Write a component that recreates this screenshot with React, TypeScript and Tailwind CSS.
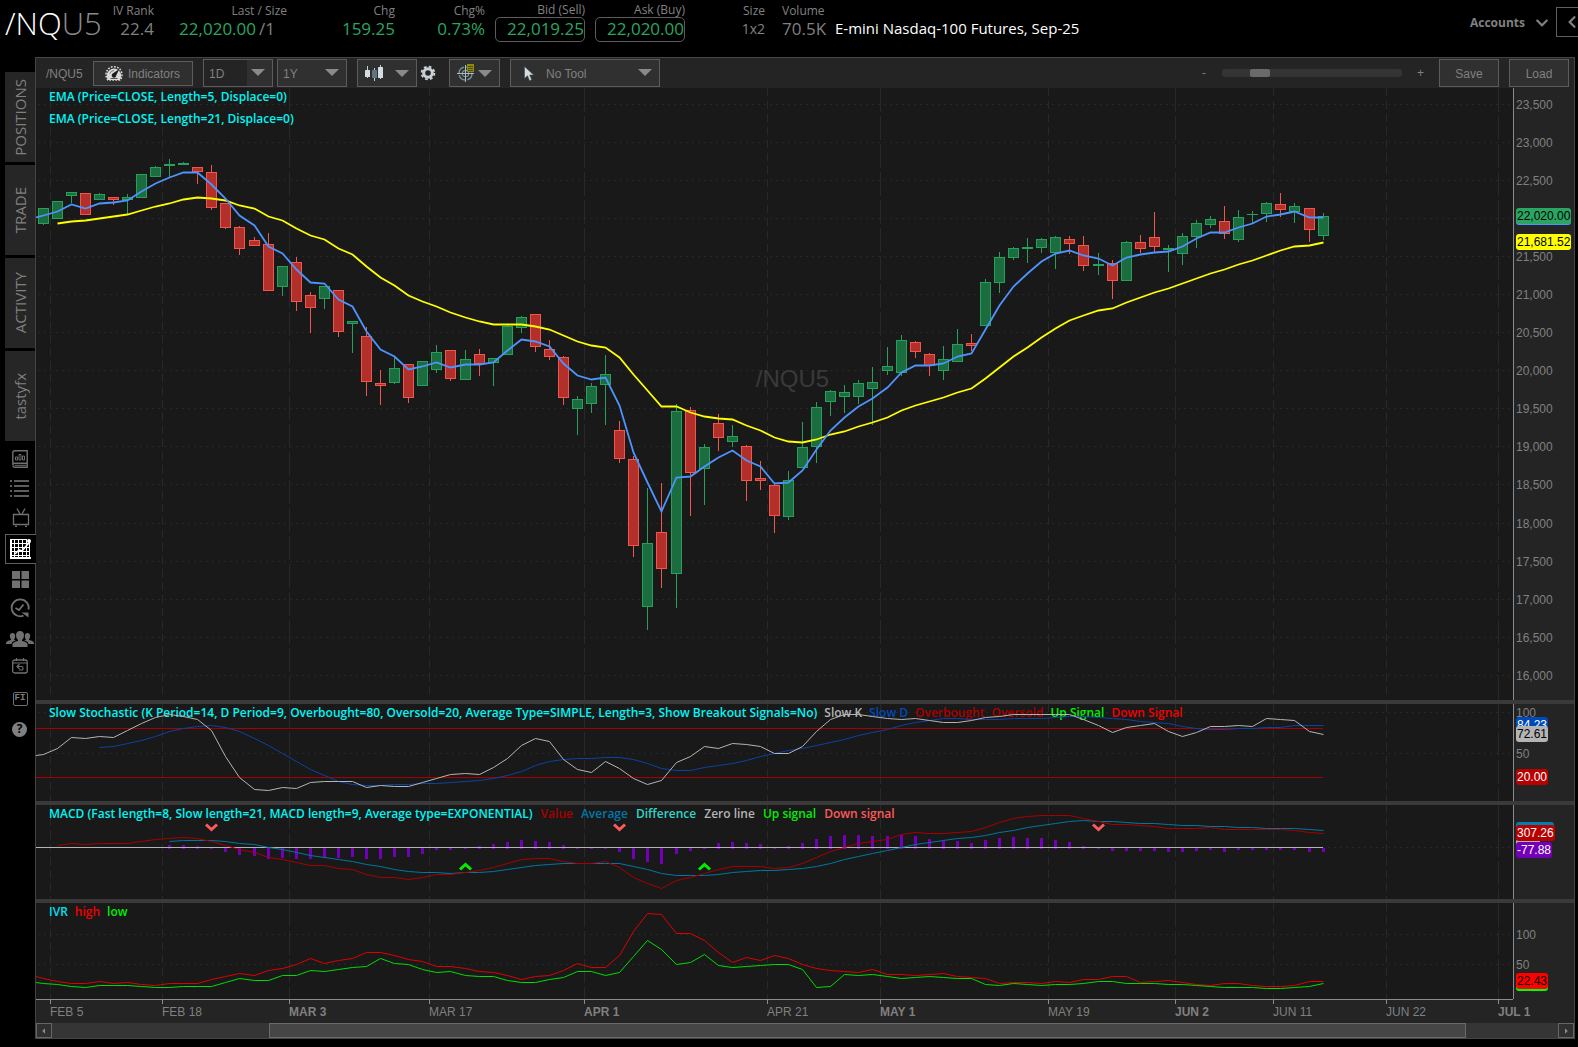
import React from "react";
import { FaCaretDown, FaChevronLeft, FaChevronDown } from "react-icons/fa";

/* ---------- chart data, in plot units ---------- */

// [direction, body top, body bottom, high, low]
type Candle = [number, number, number, number, number];
const G = 1;
const R = 0;
const candles: Candle[] = [
  [G, 208, 224, 208, 225], [G, 201, 219, 201, 219], [G, 192, 196, 192, 203], [R, 193, 215, 193, 215],
  [G, 194, 200, 193, 200], [R, 197, 200, 197, 205], [G, 197, 200, 194, 214], [G, 174, 198, 174, 198],
  [G, 167, 177, 166, 177], [G, 164, 166, 159, 177], [G, 163, 165, 162, 165], [R, 167, 172, 167, 184],
  [R, 172, 208, 165, 210], [R, 203, 228, 203, 229], [R, 227, 249, 226, 255], [R, 240, 246, 237, 246],
  [R, 244, 291, 233, 291], [G, 266, 287, 266, 296], [R, 262, 302, 257, 311], [R, 295, 308, 292, 333],
  [G, 286, 299, 286, 309], [R, 290, 332, 290, 337], [G, 321, 324, 321, 353], [R, 336, 382, 327, 396],
  [R, 383, 386, 370, 405], [G, 368, 383, 357, 384], [R, 364, 398, 364, 403], [G, 361, 386, 361, 386],
  [G, 352, 370, 345, 373], [R, 350, 379, 350, 381], [G, 359, 380, 350, 380], [R, 354, 364, 349, 376],
  [G, 358, 363, 358, 386], [G, 326, 355, 324, 355], [G, 317, 328, 316, 333], [R, 314, 347, 314, 352],
  [R, 349, 357, 340, 360], [R, 357, 398, 356, 405], [G, 399, 409, 396, 435], [G, 386, 404, 383, 413],
  [G, 374, 385, 355, 425], [R, 430, 459, 421, 463], [R, 459, 546, 456, 557], [G, 543, 607, 488, 630],
  [R, 532, 569, 483, 588], [G, 411, 574, 404, 608], [R, 410, 473, 407, 516], [G, 447, 469, 444, 505],
  [R, 423, 438, 414, 451], [G, 436, 442, 425, 447], [R, 446, 481, 445, 501], [R, 478, 481, 461, 490],
  [R, 485, 516, 483, 533], [G, 480, 517, 471, 520], [G, 447, 468, 422, 468], [G, 407, 447, 402, 463],
  [G, 391, 402, 390, 416], [G, 392, 397, 385, 413], [G, 383, 397, 380, 404], [G, 382, 389, 367, 425],
  [G, 366, 371, 347, 375], [G, 340, 373, 335, 376], [R, 342, 352, 341, 358], [R, 354, 366, 353, 376],
  [G, 359, 371, 346, 380], [G, 344, 362, 329, 362], [R, 343, 346, 334, 351], [G, 282, 326, 279, 326],
  [G, 257, 283, 252, 293], [G, 248, 258, 247, 260], [G, 247, 249, 238, 263], [G, 239, 248, 238, 253],
  [G, 237, 253, 236, 269], [R, 239, 244, 236, 254], [R, 245, 266, 236, 271], [G, 264, 266, 253, 275],
  [R, 263, 281, 260, 299], [G, 242, 281, 241, 281], [R, 242, 249, 235, 253], [R, 237, 247, 212, 253],
  [G, 248, 250, 245, 272], [G, 236, 254, 233, 265], [G, 223, 237, 220, 248], [G, 219, 225, 216, 228],
  [R, 221, 234, 206, 239], [G, 217, 240, 210, 242], [G, 214, 215, 211, 223], [G, 203, 214, 202, 222],
  [R, 204, 210, 193, 217], [G, 206, 212, 203, 223], [R, 208, 230, 208, 242], [G, 216, 236, 213, 240],
];

const ema5 = [215, 211, 204, 208, 203, 202, 200, 191, 183, 177, 172, 172, 184, 198, 215, 225, 246, 253, 269, 282, 283, 299, 306, 331, 349, 356, 369, 366, 362, 367, 364, 364, 362, 350, 339, 341, 346, 363, 375, 379, 377, 405, 452, 482, 511, 477, 476, 466, 457, 450, 460, 466, 483, 482, 470, 449, 430, 417, 406, 398, 387, 372, 365, 365, 363, 356, 353, 329, 305, 286, 273, 261, 253, 250, 255, 258, 265, 257, 254, 252, 251, 246, 238, 232, 232, 227, 223, 216, 214, 211, 217, 217];
const ema21 = [223, 221, 220, 218, 216, 214, 210, 206, 203, 199, 197, 198, 200, 205, 208, 216, 220, 228, 235, 239, 248, 254, 266, 277, 285, 295, 301, 306, 312, 317, 321, 324, 324, 324, 326, 329, 335, 341, 345, 347, 357, 374, 390, 406, 406, 412, 416, 418, 419, 425, 430, 437, 441, 442, 439, 434, 431, 426, 422, 417, 410, 405, 401, 397, 392, 388, 378, 367, 356, 347, 337, 328, 320, 315, 310, 308, 302, 297, 292, 288, 283, 278, 273, 269, 264, 260, 255, 250, 246, 245, 242];
const slowK = [754, 748, 737, 738, 736, 737, 730, 723, 717, 714, 716, 719, 730, 756, 777, 789, 790, 787, 788, 782, 781, 781, 781, 787, 785, 786, 786, 782, 778, 774, 773, 774, 767, 758, 745, 738, 741, 759, 769, 772, 761, 768, 778, 784, 780, 762, 756, 746, 748, 743, 744, 746, 753, 753, 746, 731, 719, 714, 714, 716, 718, 719, 718, 720, 722, 722, 720, 717, 716, 714, 714, 714, 714, 714, 719, 725, 732, 727, 725, 723, 731, 736, 732, 726, 726, 725, 726, 718, 719, 720, 731, 734];
const slowD = [747, 746, 743, 740, 736, 731, 728, 726, 725, 727, 731, 738, 745, 753, 761, 769, 775, 781, 784, 785, 785, 784, 784, 783, 783, 782, 781, 780, 778, 775, 771, 765, 761, 759, 758, 758, 757, 757, 759, 763, 768, 770, 770, 767, 765, 763, 760, 756, 753, 750, 748, 745, 742, 739, 735, 732, 729, 725, 722, 720, 718, 718, 719, 719, 719, 718, 718, 718, 717, 716, 716, 717, 718, 719, 721, 722, 723, 726, 728, 729, 729, 728, 728, 727, 727, 725, 725, 725];
const macdValue = [845, 843, 844, 843, 843, 843, 841, 839, 838, 837, 838, 841, 845, 849, 852, 857, 859, 862, 865, 865, 868, 869, 874, 877, 877, 879, 877, 874, 874, 872, 870, 867, 863, 859, 858, 858, 861, 863, 863, 861, 867, 877, 883, 888, 880, 877, 873, 869, 866, 866, 866, 868, 867, 863, 857, 851, 847, 843, 841, 839, 834, 832, 833, 833, 832, 831, 827, 822, 818, 816, 815, 815, 815, 818, 821, 824, 824, 825, 826, 828, 828, 828, 827, 829, 829, 829, 829, 829, 830, 832, 833];
const macdAvg = [841, 840, 840, 840, 841, 843, 844, 847, 849, 852, 855, 857, 859, 861, 864, 866, 869, 871, 872, 872, 873, 872, 872, 871, 869, 867, 865, 864, 863, 863, 863, 863, 863, 866, 869, 873, 875, 875, 875, 874, 872, 871, 870, 870, 869, 868, 866, 863, 859, 856, 853, 850, 847, 844, 842, 840, 838, 837, 835, 832, 830, 827, 825, 823, 821, 820, 821, 821, 822, 823, 823, 824, 825, 825, 826, 826, 827, 827, 828, 828, 828, 829, 830];
const macdDiff = [845, 845, 846, 849, 852, 855, 856, 859, 858, 859, 859, 858, 858, 857, 859, 859, 857, 857, 854, 850, 850, 849, 846, 844, 842, 840, 841, 842, 845, 847, 849, 847, 852, 859, 862, 864, 854, 851, 849, 843, 842, 843, 844, 849, 846, 843, 839, 836, 835, 835, 836, 836, 835, 836, 839, 841, 841, 843, 840, 838, 837, 838, 838, 840, 842, 846, 849, 851, 851, 851, 851, 852, 852, 851, 850, 852, 850, 850, 850, 850, 850, 852, 852];
const ivHigh = [978, 981, 983, 983, 981, 983, 982, 984, 985, 983, 983, 983, 979, 976, 973, 975, 970, 968, 964, 958, 963, 960, 958, 952, 952, 955, 959, 961, 966, 966, 968, 971, 972, 975, 979, 976, 975, 970, 963, 967, 967, 955, 931, 913, 914, 933, 933, 940, 952, 962, 957, 960, 955, 958, 964, 968, 970, 971, 972, 969, 974, 974, 975, 974, 973, 976, 977, 978, 983, 982, 982, 983, 981, 982, 979, 979, 976, 976, 982, 981, 980, 982, 984, 985, 983, 983, 985, 986, 986, 985, 981, 981];
const ivLow = [983, 984, 986, 987, 985, 985, 985, 986, 987, 987, 986, 986, 986, 982, 978, 980, 980, 975, 975, 970, 971, 969, 967, 966, 958, 963, 964, 969, 972, 971, 975, 976, 976, 980, 982, 982, 979, 977, 971, 971, 975, 972, 956, 940, 949, 964, 962, 954, 965, 967, 966, 965, 964, 964, 969, 987, 986, 974, 975, 974, 976, 978, 977, 976, 977, 978, 978, 984, 985, 983, 984, 985, 984, 984, 983, 981, 981, 983, 983, 983, 984, 984, 985, 986, 987, 987, 987, 988, 988, 987, 986, 983];

const X0 = 36;
const PLOT_W = 1477;
const barX = (i: number) => 43 + 14 * i + Math.floor(i / 15);
const line = (ys: number[], first: number, lead?: number) =>
  (lead === undefined ? "" : `${X0},${lead + 0.5} `) +
  ys.map((y, i) => `${barX(i + first) + 0.5},${y + 0.5}`).join(" ");

const dates = [
  { x: 50, label: "FEB 5", major: false },
  { x: 162, label: "FEB 18", major: false },
  { x: 289, label: "MAR 3", major: true },
  { x: 429, label: "MAR 17", major: false },
  { x: 584, label: "APR 1", major: true },
  { x: 767, label: "APR 21", major: false },
  { x: 880, label: "MAY 1", major: true },
  { x: 1048, label: "MAY 19", major: false },
  { x: 1175, label: "JUN 2", major: true },
  { x: 1273, label: "JUN 11", major: false },
  { x: 1386, label: "JUN 22", major: false },
  { x: 1498, label: "JUL 1", major: true },
];

const prices: [number, string][] = [
  [104, "23,500"], [142, "23,000"], [180, "22,500"], [218, "22,000"], [256, "21,500"], [294, "21,000"],
  [332, "20,500"], [370, "20,000"], [408, "19,500"], [446, "19,000"], [484, "18,500"], [523, "18,000"],
  [561, "17,500"], [599, "17,000"], [637, "16,500"], [675, "16,000"],
];

/* ---------- chart pane ---------- */

type Badge = { y: number; text?: string; cls: string };

type PaneProps = {
  name: string;
  top: number;
  height: number;
  className: string;
  ticks: [number, string][];
  badges: Badge[];
  legend: React.ReactNode;
  children: React.ReactNode;
};

function Pane({ name, top, height, className, ticks, badges, legend, children }: PaneProps) {
  const viewBox = `${X0} ${top} ${PLOT_W} ${height}`;
  const pct = (y: number) => `${((y + 1 - top) / height) * 100}%`;
  return (
    <section aria-label={name} className={`flex ${className}`}>
      <div className="relative min-w-0 flex-1 overflow-hidden bg-[#191919]">
        <svg className="absolute inset-0 h-full w-full" viewBox={viewBox} preserveAspectRatio="none" aria-hidden="true">
          {ticks.map(([y]) => (
            <line key={y} x1={X0 + 2} x2={X0 + PLOT_W} y1={y + 0.5} y2={y + 0.5} stroke="#272727" strokeDasharray="2 4" />
          ))}
          {dates.map((d) => (
            <line
              key={d.x}
              x1={d.x + 0.5}
              x2={d.x + 0.5}
              y1={top}
              y2={top + height}
              stroke="#292929"
              strokeDasharray={d.major ? "24 4" : "8 5"}
            />
          ))}
        </svg>
        {legend}
        <svg className="absolute inset-0 h-full w-full" viewBox={viewBox} preserveAspectRatio="none" role="img" aria-label={name}>
          {children}
        </svg>
      </div>
      <div className="relative w-[61px] shrink-0 overflow-hidden border-l border-[#8c8c8c] bg-[#242424] text-xs text-[#808080]">
        {ticks.map(([y, t]) =>
          t ? (
            <span key={y} className="absolute left-[2px] -translate-y-1/2 leading-4" style={{ top: pct(y) }}>
              {t}
            </span>
          ) : null
        )}
        {badges.map((b, i) => (
          <span
            key={i}
            className={`absolute left-[2px] h-4 -translate-y-1/2 rounded-[3px] px-px leading-4 ${b.cls}`}
            style={{ top: pct(b.y - 1) }}
          >
            {b.text}
          </span>
        ))}
      </div>
    </section>
  );
}

const Divider = () => <div className="h-1 shrink-0 bg-[#3a3a3a]" />;

function Legend({ items, gap = "gap-2" }: { items: [string, string][]; gap?: string }) {
  return (
    <div className={`absolute left-[13px] top-px flex whitespace-nowrap font-['Open_Sans',sans-serif] text-xs font-semibold leading-4 ${gap}`}>
      {items.map(([text, cls]) => (
        <span key={text} className={cls}>
          {text}
        </span>
      ))}
    </div>
  );
}

function Candles() {
  return (
    <g shapeRendering="crispEdges">
      {candles.map(([up, t, b, h, l], i) => {
        const x = barX(i);
        const stroke = up ? "#27a05b" : "#f0564c";
        const fill = up ? "#1b6c3e" : "#b3302a";
        return (
          <g key={i}>
            <rect x={x} y={h} width={1} height={l - h} fill={stroke} />
            <rect x={x - 5} y={t} width={11} height={b - t} fill={stroke} />
            {b - t > 2 && <rect x={x - 4} y={t + 1} width={9} height={b - t - 2} fill={fill} />}
          </g>
        );
      })}
    </g>
  );
}

/* ---------- toolbar and side icons ---------- */

function GaugeIcon() {
  return (
    <svg viewBox="0 0 18 16" className="h-4 w-[18px]" aria-hidden="true">
      <path d="M3 15A8 8 0 1 1 15 15Z" fill="none" stroke="#d6d6d6" strokeWidth="1.6" strokeDasharray="1.7 1.3" />
      <path d="M3.2 15A7.200 7.200 0 1 1 14.800 15Z" fill="#d9d9d9" />
      <path d="M4.800 8.500A4.500 4.500 0 0 1 9 5.500" stroke="#777" strokeWidth="1" fill="none" />
      <path d="M14.300 4 11.300 10.300a2.300 2.300 0 1 1-3.200-2Z" fill="#1c1c1c" />
      <rect x="5.500" y="13" width="7" height="1" fill="#555" />
    </svg>
  );
}

function CandleIcon() {
  return (
    <svg viewBox="0 0 18 16" className="h-4 w-[18px]" aria-hidden="true">
      <path d="M2.500 1v12M9.500 3v13M15.500 0v14" stroke="#c3d0d6" />
      <rect x="0" y="5" width="5" height="7" rx=".5" fill="#d5dde0" />
      <rect x="7" y="5" width="5" height="8" rx=".5" fill="#5f7680" />
      <rect x="13" y="2" width="5" height="11" rx=".5" fill="#d5dde0" />
    </svg>
  );
}

function GearIcon() {
  return (
    <svg viewBox="0 0 16 16" className="h-4 w-4" aria-hidden="true">
      <circle cx="8" cy="8" r="6.4" fill="none" stroke="#cfd8db" strokeWidth="1.8" strokeDasharray="2.7 2.327" />
      <circle cx="8" cy="8" r="4.300" fill="none" stroke="#c8d2d6" strokeWidth="3" />
    </svg>
  );
}

function CrosshairIcon() {
  return (
    <svg viewBox="0 0 18 18" className="h-[18px] w-[18px]" aria-hidden="true">
      <circle cx="8.500" cy="9.500" r="6.500" fill="none" stroke="#76909c" strokeWidth="1.400" strokeDasharray="8 2.200" />
      <circle cx="8.500" cy="9.500" r="3.200" fill="none" stroke="#76909c" strokeWidth="1.200" />
      <path d="M8.500 1v17M0 9.500h17" stroke="#a9bcc4" />
      <rect x="10" y="0" width="7" height="8" fill="#8f8a10" />
      <path d="M11 2.500h5M11 4.500h5M11 6.500h5" stroke="#4f4b08" />
    </svg>
  );
}

function CursorIcon() {
  return (
    <svg viewBox="0 0 10 16" className="h-4 w-[10px]" aria-hidden="true">
      <path d="M.5.5v12l3-2.800 2 5 2.200-1-2-4.700h4Z" fill="#d5dde0" stroke="#3b474c" strokeWidth=".6" />
    </svg>
  );
}

type Glyph = { name: string; cls: string; art: React.ReactNode };

const glyphs: Glyph[] = [
  {
    name: "Watchlist report",
    cls: "mt-2 h-5",
    art: (
      <svg viewBox="0 0 16 18" className="h-[18px] w-4">
        <path d="M.8 2.500Q.8.700 2.600.700h12.600v12.600H2.600Q.8 13.300.8 15V2.500M15.200 13.300v4H2.600A2 2 0 0 1 .8 15.400" fill="none" stroke="#707070" strokeWidth="1.400" />
        <path d="M2.500 15.300h12" stroke="#707070" />
        <path d="M3.500 10V7h2v3ZM7 10V4.500h2V10ZM10.500 10V6h2v4Z" fill="none" stroke="#707070" />
      </svg>
    ),
  },
  {
    name: "List",
    cls: "mt-[10px] h-[18px]",
    art: (
      <svg viewBox="0 0 20 17" className="h-[17px] w-5" shapeRendering="crispEdges">
        <path d="M0 1h2M0 6h2M0 11h2M0 16h2M4 1h15M4 6h15M4 11h15M4 16h15" stroke="#5e5e5e" strokeWidth="2" />
      </svg>
    ),
  },
  {
    name: "TV",
    cls: "mt-[10px] h-5",
    art: (
      <svg viewBox="0 0 18 19" className="ml-[2px] h-[19px] w-[18px]">
        <path d="M1.500 6.500h15v10h-15ZM3 18.300h2M13 18.300h2M8 6 5 .5M10 6l3-5.500" fill="none" stroke="#707070" strokeWidth="1.300" />
      </svg>
    ),
  },
  {
    name: "Chart",
    cls: "relative z-10 -mr-px mt-[7px] h-[30px] border border-r-0 border-[#606060] bg-black pr-[2px]",
    art: (
      <svg viewBox="0 0 21 20" className="h-5 w-[21px]">
        <path
          d="M4.500 0v20M8.500 0v20M12.500 0v20M16.500 0v20M19.500 5v15M0 .500h17M0 4.500h20M0 8.500h20M0 12.500h20M0 16.500h20"
          stroke="#fff"
          shapeRendering="crispEdges"
        />
        <path d="M1 0v19h20" stroke="#fff" strokeWidth="2" fill="none" />
        <path d="M5 15 9 11l3 1 5-6 3-3" stroke="#fff" strokeWidth="1.600" fill="none" />
        <circle cx="19" cy="2" r="2" fill="#fff" />
      </svg>
    ),
  },
  {
    name: "Grid",
    cls: "mt-[6px] h-[18px]",
    art: (
      <svg viewBox="0 0 17 17" className="h-[17px] w-[17px] fill-[#707070]">
        <path d="M0 0h8v8H0zM9.500 0h8v8h-8zM0 9.500h8v8H0zM9.500 9.500h8v8h-8z" />
      </svg>
    ),
  },
  {
    name: "History",
    cls: "mt-[10px] h-5",
    art: (
      <svg viewBox="0 0 20 20" className="h-5 w-5">
        <path d="M13.500 17.600A8.500 8.500 0 1 1 18.500 11.500" fill="none" stroke="#707070" strokeWidth="1.800" />
        <path d="M11.500 14.500h7v5Z" fill="#707070" />
        <path d="M5.500 10 9 12l4.500-5.500" fill="none" stroke="#707070" strokeWidth="1.800" />
      </svg>
    ),
  },
  {
    name: "Community",
    cls: "mt-3 h-[17px]",
    art: (
      <svg viewBox="0 0 28 16" className="h-4 w-7 fill-[#707070]">
        <path d="M14 0q4 0 4 4.500 0 3-2 4.500v1q5.500 1 5.500 3.500V16h-15v-2.500Q6.500 11 12 10V9q-2-1.500-2-4.500Q10 0 14 0Z" />
        <path d="M6.500 2q2.500 0 2.700 3 0 2-1 3.200v.8L10 9.600Q5.800 10.600 5.500 13H0v-1Q.3 10 5 9v-.800Q3.800 7 3.800 5 4 2 6.500 2ZM21.500 2q-2.500 0-2.700 3 0 2 1 3.200v.8L18 9.600q4.200 1 4.500 3.400H28v-1q-.3-2-5-3v-.800q1.200-1.200 1.200-3.200-.2-3-2.700-3Z" />
      </svg>
    ),
  },
  {
    name: "Calendar",
    cls: "mt-[11px] h-4",
    art: (
      <svg viewBox="0 0 16 16" className="h-4 w-4">
        <rect x=".7" y="2" width="14.500" height="13" rx="2" fill="none" stroke="#707070" strokeWidth="1.300" />
        <path d="M1 5h14M4.500 0v3M11.500 0v3" stroke="#707070" strokeWidth="1.200" />
        <path d="M7.500 6 5 8.500 7.500 11M5 8.500h4.500q1.500 0 1.500 1.800t-1.500 1.700H7" fill="none" stroke="#707070" strokeWidth="1.200" />
      </svg>
    ),
  },
  {
    name: "Fixed income",
    cls: "mt-[17px] h-[15px]",
    art: (
      <span className="flex h-[14px] w-[15px] items-center justify-center rounded-[2px] border border-[#707070] font-['Liberation_Mono',monospace] text-[9px] font-bold leading-none">
        FI
      </span>
    ),
  },
  {
    name: "Help",
    cls: "mt-[15px] h-4",
    art: (
      <span className="-ml-px flex h-[15px] w-[15px] items-center justify-center rounded-full bg-[#808080] font-['Open_Sans',sans-serif] text-[12px] font-bold leading-none text-black">
        ?
      </span>
    ),
  },
];

/* ---------- header quote cells ---------- */

function Quote({ label, children, className, align = "items-end" }: { label: string; children: React.ReactNode; className: string; align?: string }) {
  return (
    <div className={`flex shrink-0 flex-col whitespace-nowrap ${align} ${className}`}>
      <span className="text-xs leading-4 text-[#808080]">{label}</span>
      <span className="flex h-5 items-center text-[17px] leading-5">{children}</span>
    </div>
  );
}

function PriceButton({ label, value }: { label: string; value: string }) {
  return (
    <div className="ml-[10px] flex w-[90px] flex-col items-end whitespace-nowrap">
      <span className="text-xs leading-[14px]">{label}</span>
      <button
        type="button"
        aria-label={`${label} ${value}`}
        className="h-[25px] w-full rounded-[5px] border border-[#5c5c5c] pb-[2px] text-right text-[17px] leading-5 text-[#2aa562]"
      >
        {value}
      </button>
    </div>
  );
}

function Select({ label, value, className, selectCls }: { label: string; value: string; className: string; selectCls: string }) {
  return (
    <div className={`relative shrink-0 ${className}`}>
      <select
        aria-label={label}
        defaultValue={value}
        className={`h-7 w-full appearance-none border border-[#5c5c5c] pt-px text-xs text-[#808080] outline-none ${selectCls}`}
      >
        <option>{value}</option>
      </select>
      <span className="pointer-events-none absolute right-[8px] top-[10px] border-x-[7px] border-t-[7px] border-x-transparent border-t-[#8a8a8a]" />
    </div>
  );
}

const Arrow = () => <span className="border-x-[7px] border-t-[7px] border-x-transparent border-t-[#8a8a8a]" />;

export default function App() {
  return (
    <div className="flex h-screen flex-col overflow-hidden bg-black font-['Liberation_Sans',Arial,sans-serif]">
      <header className="flex h-[57px] shrink-0 items-start overflow-hidden font-['Open_Sans',sans-serif] text-[#808080]">
        <h1 className="ml-[5px] mt-[3px] w-[96px] shrink-0 text-[31px] font-light leading-[40px] text-[#8a8a8a]">
          <span className="text-white">/NQ</span>U5
        </h1>
        <div className="mt-[3px] flex">
          <Quote label="IV Rank" className="w-[53px]">22.4</Quote>
          <Quote label="Last / Size" className="w-[133px]">
            <span className="text-[#2aa562]">22,020.00</span>
            <span className="ml-[3px] mr-3">/1</span>
          </Quote>
          <Quote label="Chg" className="w-[108px] text-[#2aa562]">159.25</Quote>
          <Quote label="Chg%" className="w-[90px] text-[#2aa562]">0.73%</Quote>
          <PriceButton label="Bid (Sell)" value="22,019.25" />
          <PriceButton label="Ask (Buy)" value="22,020.00" />
          <Quote label="Size" className="w-[80px]">
            <span className="text-sm">1x2</span>
          </Quote>
          <Quote label="Volume" className="ml-[17px] w-[53px]" align="items-start">70.5K</Quote>
          <p className="mt-[14px] whitespace-nowrap text-[15px] leading-[22px] text-white">E-mini Nasdaq-100 Futures, Sep-25</p>
        </div>
        <button type="button" className="ml-auto mt-[12px] flex items-center gap-[10px] text-xs font-bold leading-[22px] text-[#808080]">
          Accounts
          <FaChevronDown className="h-[14px] w-[14px]" aria-hidden="true" />
        </button>
        <button type="button" aria-label="Expand panel" className="ml-[7px] mt-[7px] flex h-[30px] w-[22px] items-center justify-end border border-r-0 border-[#606060]">
          <FaChevronLeft className="h-[14px] w-[12px]" aria-hidden="true" />
        </button>
      </header>

      <div className="flex min-h-0 flex-1 pb-2 pr-[3px]">
        <nav aria-label="Workspace" className="flex w-[35px] shrink-0 flex-col pl-[5px] pt-[15px] font-['Open_Sans',sans-serif] text-[#808080]">
          <div className="flex flex-col gap-[3px]">
            {["POSITIONS", "TRADE", "ACTIVITY", "tastyfx"].map((t) => (
              <button key={t} type="button" className="flex h-[90px] items-center justify-center bg-[#262626] text-[15px] leading-5">
                <span className="rotate-180 [writing-mode:vertical-rl]">{t}</span>
              </button>
            ))}
          </div>
          {glyphs.map((g) => (
            <button key={g.name} type="button" aria-label={g.name} className={`flex shrink-0 items-center justify-center ${g.cls}`}>
              {g.art}
            </button>
          ))}
        </nav>

        <main className="flex min-w-0 flex-1 flex-col border border-[#444]">
          <div className="flex h-[30px] shrink-0 items-center bg-[#242424] text-xs text-[#808080]">
            <span className="ml-[10px] w-[47px] shrink-0 pt-px">/NQU5</span>
            <button type="button" className="flex h-[25px] w-[100px] shrink-0 items-center gap-[5px] border border-[#5c5c5c] bg-[#2f2f2f] pl-[11px]">
              <GaugeIcon />
              <span className="pt-px">Indicators</span>
            </button>
            <Select label="Aggregation" value="1D" className="ml-[10px] w-[70px]" selectCls="bg-[linear-gradient(to_right,#242424_43px,#303030_43px)] pl-[5px]" />
            <Select label="Range" value="1Y" className="ml-1 w-[70px]" selectCls="bg-[#303030] pl-[5px]" />
            <button type="button" aria-label="Chart type" className="ml-[10px] flex h-7 w-[60px] shrink-0 items-center justify-between border border-[#5c5c5c] bg-[#303030] px-[7px]">
              <CandleIcon />
              <Arrow />
            </button>
            <button type="button" aria-label="Chart settings" className="ml-[3px] w-4 shrink-0">
              <GearIcon />
            </button>
            <button type="button" aria-label="Crosshair" className="ml-[13px] flex h-7 w-[51px] shrink-0 items-center justify-between border border-[#5c5c5c] bg-[#303030] px-[7px]">
              <CrosshairIcon />
              <Arrow />
            </button>
            <div className="relative ml-[10px] shrink-0">
              <Select label="Drawing tool" value="No Tool" className="w-[150px]" selectCls="bg-[#303030] pl-[35px]" />
              <span className="pointer-events-none absolute left-[14px] top-[7px]">
                <CursorIcon />
              </span>
            </div>
            <div className="ml-auto flex shrink-0 items-center">
              <span className="w-[20px]">-</span>
              <input
                type="range"
                aria-label="Zoom"
                min={0}
                max={1000}
                defaultValue={175}
                className="h-2 w-[180px] appearance-none rounded-[3px] bg-[#343434] [&::-webkit-slider-thumb]:h-2 [&::-webkit-slider-thumb]:w-5 [&::-webkit-slider-thumb]:appearance-none [&::-webkit-slider-thumb]:rounded-[2px] [&::-webkit-slider-thumb]:bg-[#6a6a6a]"
              />
              <span className="ml-[15px] w-[22px]">+</span>
              <button type="button" className="h-7 w-[60px] border border-[#5c5c5c] bg-[#303030] pt-px">Save</button>
              <button type="button" className="ml-[10px] mr-[5px] h-7 w-[60px] border border-[#5c5c5c] bg-[#303030] pt-px">Load</button>
            </div>
          </div>

          <Pane
            name="Price chart"
            top={88}
            height={612}
            className="min-h-0 flex-1"
            ticks={prices}
            badges={[
              { y: 217, cls: "w-[55px] bg-[#4d94ff]" },
              { y: 216, text: "22,020.00", cls: "bg-[#2aa562] text-black" },
              { y: 242, text: "21,681.52", cls: "bg-[#ffff00] text-black" },
            ]}
            legend={
              <>
                <div className="absolute left-[13px] top-0 font-['Open_Sans',sans-serif] text-xs font-semibold leading-[22px] text-[#00f5f5]">
                  <p className="-mt-[2px]">EMA (Price=CLOSE, Length=5, Displace=0)</p>
                  <p>EMA (Price=CLOSE, Length=21, Displace=0)</p>
                </div>
                <div className="absolute inset-0 flex items-center justify-center pb-[30px] pl-9 text-2xl text-[#3a3a3a]">/NQU5</div>
              </>
            }
          >
            <Candles />
            <polyline points={line(ema21, 1)} fill="none" stroke="#ffff00" strokeWidth="1.8" />
            <polyline points={line(ema5, 0, 217)} fill="none" stroke="#4d94ff" strokeWidth="1.8" />
          </Pane>
          <Divider />
          <Pane
            name="Slow Stochastic"
            top={704}
            height={97}
            className="h-[97px] shrink-0"
            ticks={[[712, "100"], [753, "50"]]}
            badges={[
              { y: 725, text: "84.23", cls: "bg-[#0049b8] text-white" },
              { y: 734, text: "72.61", cls: "bg-[#b4b4b4] text-black" },
              { y: 777, text: "20.00", cls: "bg-[#b80000] text-white" },
            ]}
            legend={
              <Legend
                gap="gap-[7px]"
                items={[
                  ["Slow Stochastic (K Period=14, D Period=9, Overbought=80, Oversold=20, Average Type=SIMPLE, Length=3, Show Breakout Signals=No)", "text-[#00f5f5]"],
                  ["Slow K", "text-[#b4b4b4]"],
                  ["Slow D", "text-[#0049b8]"],
                  ["Overbought", "text-[#a80000]"],
                  ["Oversold", "text-[#a80000]"],
                  ["Up Signal", "text-[#00f000]"],
                  ["Down Signal", "text-[#f00000]"],
                ]}
              />
            }
          >
            <path d="M36 728.500H1323M36 777.500H1323" stroke="#a80000" />
            <polyline points={line(slowD, 4)} fill="none" stroke="#0b43a0" strokeWidth="1" />
            <polyline points={line(slowK, 0, 755)} fill="none" stroke="#b4b4b4" strokeWidth="1" />
          </Pane>
          <Divider />
          <Pane
            name="MACD"
            top={805}
            height={94}
            className="h-[94px] shrink-0"
            ticks={[[847, ""]]}
            badges={[
              { y: 847, cls: "w-6 bg-[#b4b4b4]" },
              { y: 830, cls: "w-[38px] bg-[#0080b0]" },
              { y: 833, text: "307.26", cls: "bg-[#b80000] text-white" },
              { y: 850, text: "-77.88", cls: "bg-[#7200b8] text-white" },
            ]}
            legend={
              <Legend
                items={[
                  ["MACD (Fast length=8, Slow length=21, MACD length=9, Average type=EXPONENTIAL)", "text-[#00f5f5]"],
                  ["Value", "text-[#a80000]"],
                  ["Average", "text-[#0077aa]"],
                  ["Difference", "text-[#30d5c8]"],
                  ["Zero line", "text-[#b4b4b4]"],
                  ["Up signal", "text-[#00f000]"],
                  ["Down signal", "text-[#ff5a5a]"],
                ]}
              />
            }
          >
            <g shapeRendering="crispEdges" fill="#7200b8">
              {macdDiff.map((y, i) => (
                <rect key={i} x={barX(i + 9) - 1} y={Math.min(y, 848)} width={3} height={y < 848 ? 849 - y : y - 848} />
              ))}
              <rect x={36} y={847} width={1287} height={1} fill="#b4b4b4" />
            </g>
            <polyline points={line(macdAvg, 9)} fill="none" stroke="#0077a0" strokeWidth="1" />
            <polyline points={line(macdValue, 1)} fill="none" stroke="#a80000" strokeWidth="1" />
            {[12, 41, 75].map((i) => (
              <path key={i} d={`M${barX(i) - 5} 824.500l5.500 5 5.500-5`} fill="none" stroke="#ff5a5a" strokeWidth="3" />
            ))}
            {[30, 47].map((i) => (
              <path key={i} d={`M${barX(i) - 5} 869.500l5.500-5 5.500 5`} fill="none" stroke="#00f000" strokeWidth="3" />
            ))}
          </Pane>
          <Divider />
          <Pane
            name="IVR"
            top={903}
            height={96}
            className="h-24 shrink-0"
            ticks={[[934, "100"], [964, "50"]]}
            badges={[
              { y: 983, cls: "w-8 bg-[#00ff00]" },
              { y: 981, text: "22.43", cls: "bg-[#ff0000] text-black" },
            ]}
            legend={<Legend gap="gap-[7px]" items={[["IVR", "text-[#00e0f0]"], ["high", "text-[#f00000]"], ["low", "text-[#00f000]"]]} />}
          >
            <polyline points={line(ivHigh, 0, 976)} fill="none" stroke="#e00000" strokeWidth="1" />
            <polyline points={line(ivLow, 0, 982)} fill="none" stroke="#00dc00" strokeWidth="1" />
          </Pane>

          <div className="flex h-6 shrink-0 bg-[#242424] text-xs text-[#808080]">
            <div className="relative min-w-0 flex-1 border-t border-[#8c8c8c]">
              {dates.map((d) => (
                <div key={d.x} className="absolute top-0 h-1 border-l border-[#8c8c8c]" style={{ left: `${((d.x - X0) / PLOT_W) * 100}%` }}>
                  <span className={`absolute -left-px top-1 whitespace-nowrap leading-4 ${d.major ? "font-bold" : ""}`}>{d.label}</span>
                </div>
              ))}
            </div>
            <div className="w-[61px] shrink-0" />
          </div>
          <div className="flex h-[15px] shrink-0 bg-[#353535] text-[#8a8a8a]">
            <button type="button" aria-label="Scroll left" className="flex w-4 items-center justify-center border border-[#666] bg-[#303030]">
              <FaCaretDown className="h-2 w-2 rotate-90" aria-hidden="true" />
            </button>
            <div className="flex flex-1">
              <div className="w-[14.4%]" />
              <div className="w-[79.5%] border border-[#6a6a6a] bg-[#464646]" />
            </div>
            <button type="button" aria-label="Scroll right" className="flex w-4 items-center justify-center border border-[#666] bg-[#303030]">
              <FaCaretDown className="h-2 w-2 -rotate-90" aria-hidden="true" />
            </button>
          </div>
        </main>
      </div>
    </div>
  );
}
